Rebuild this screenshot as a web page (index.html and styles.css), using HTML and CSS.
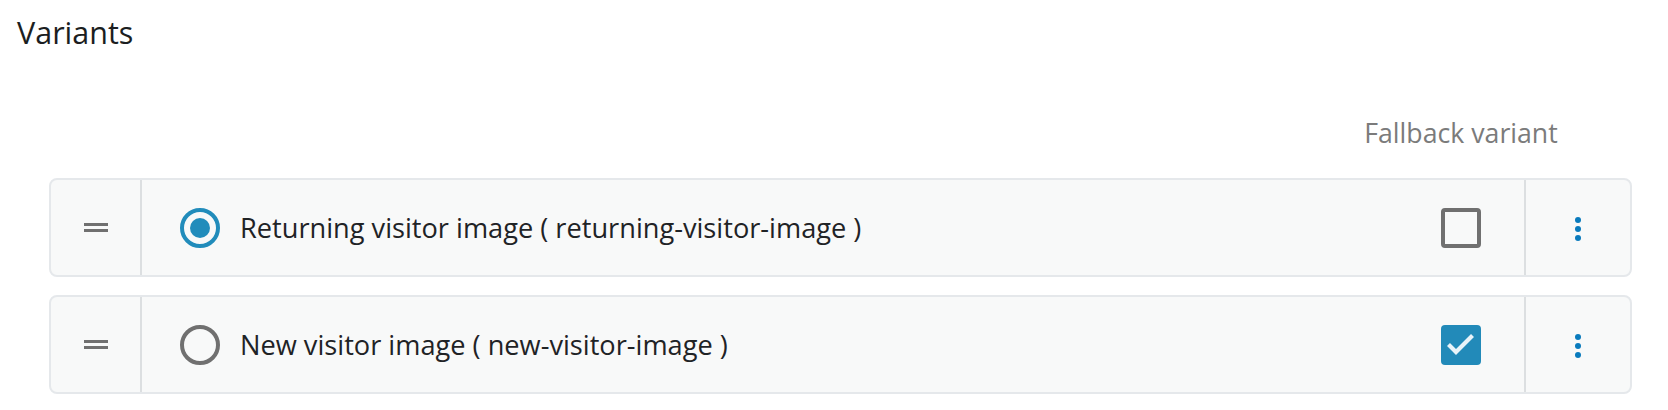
FILE: index.html
```html
<!DOCTYPE html>
<html lang="en">
<head>
<meta charset="utf-8">
<title>Variants</title>
<link rel="stylesheet" href="styles.css">
</head>
<body>
<div class="page">
  <h2 class="title">Variants</h2>
  <div class="list">
    <div class="head">
      <div class="head-spacer"></div>
      <div class="head-fallback">Fallback variant</div>
      <div class="head-menu"></div>
    </div>
    <div class="row">
      <div class="cell-drag">
        <span class="drag"><span class="drag-line"></span><span class="drag-line"></span></span>
      </div>
      <div class="cell-main">
        <span class="radio radio-on"><span class="radio-dot"></span></span>
        <span class="label">Returning visitor image ( returning-visitor-image )</span>
      </div>
      <div class="cell-check">
        <span class="checkbox"></span>
      </div>
      <div class="cell-menu">
        <span class="dots"><span class="dot"></span><span class="dot"></span><span class="dot"></span></span>
      </div>
    </div>
    <div class="row">
      <div class="cell-drag">
        <span class="drag"><span class="drag-line"></span><span class="drag-line"></span></span>
      </div>
      <div class="cell-main">
        <span class="radio"></span>
        <span class="label">New visitor image ( new-visitor-image )</span>
      </div>
      <div class="cell-check">
        <span class="checkbox checkbox-on">
          <svg width="40" height="40" viewBox="0 0 40 40"><path d="M7.5 19.5l7.5 7.5 16.5-16.5" fill="none" stroke="#e8f3f9" stroke-width="4.2"/></svg>
        </span>
      </div>
      <div class="cell-menu">
        <span class="dots"><span class="dot"></span><span class="dot"></span><span class="dot"></span></span>
      </div>
    </div>
  </div>
</div>
</body>
</html>
```
FILE: styles.css
```css
html, body {
  margin: 0;
  padding: 0;
  background: #ffffff;
}
body {
  font-family: "Open Sans", "Lato", sans-serif;
  color: #1f2326;
}
.page {
  padding: 12px 36px 0 17px;
}
.title {
  margin: 0;
  font-size: 30.5px;
  line-height: 40px;
  font-weight: 400;
  color: #1b1e21;
}
.list {
  margin-left: 32px;
  margin-top: 63px;
  display: flex;
  flex-direction: column;
}
.head {
  display: flex;
  height: 36px;
  margin-bottom: 27px;
}
.head-spacer {
  flex: 1;
}
.head-fallback {
  width: 126px;
  display: flex;
  justify-content: center;
  white-space: nowrap;
  font-size: 26.7px;
  line-height: 36px;
  color: #7b7b7b;
}
.head-menu {
  width: 108px;
}
.row {
  display: flex;
  align-items: stretch;
  height: 95px;
  border: 2px solid #e5e8eb;
  border-radius: 8px;
  background: #f8f9f9;
  margin-bottom: 18px;
}
.cell-drag {
  width: 89px;
  border-right: 2px solid #dcdfe1;
  display: flex;
  align-items: center;
  justify-content: center;
}
.drag {
  display: flex;
  flex-direction: column;
  gap: 3px;
  width: 24px;
}
.drag-line {
  display: block;
  height: 3px;
  background: #707070;
}
.cell-main {
  flex: 1;
  display: flex;
  align-items: center;
  padding-left: 38px;
  gap: 20px;
}
.radio {
  width: 40px;
  height: 40px;
  box-sizing: border-box;
  border: 4px solid #707070;
  border-radius: 50%;
  display: flex;
  align-items: center;
  justify-content: center;
  flex: none;
}
.radio-on {
  border-color: #218cbb;
}
.radio-dot {
  width: 20px;
  height: 20px;
  border-radius: 50%;
  background: #218cbb;
}
.label {
  font-size: 27.2px;
  line-height: 36px;
  color: #1f2326;
  white-space: nowrap;
}
.cell-check {
  width: 126px;
  display: flex;
  align-items: center;
  justify-content: center;
  border-right: 2px solid #dcdfe1;
}
.checkbox {
  width: 40px;
  height: 40px;
  box-sizing: border-box;
  border: 4px solid #707070;
  border-radius: 4px;
  display: block;
}
.checkbox-on {
  border: none;
  background: #228ab9;
}
.checkbox svg {
  display: block;
}
.cell-menu {
  width: 104px;
  display: flex;
  align-items: center;
  justify-content: center;
}
.dots {
  display: flex;
  flex-direction: column;
  gap: 3px;
  margin-top: 2px;
}
.dot {
  display: block;
  width: 6px;
  height: 6px;
  border-radius: 50%;
  background: #0a7bbd;
}
```
